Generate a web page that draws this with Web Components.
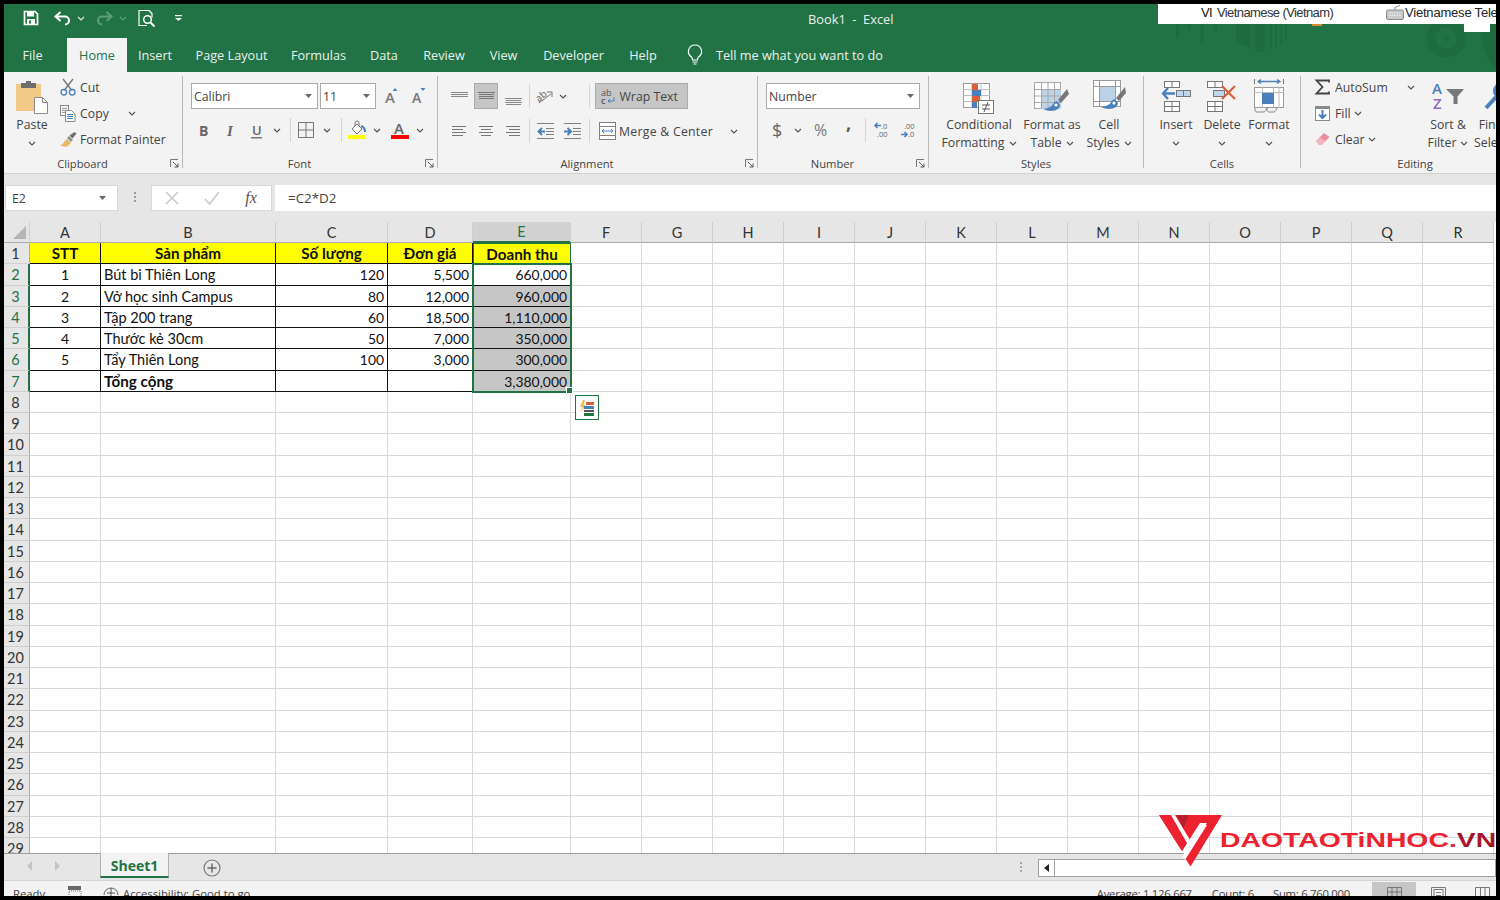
<!DOCTYPE html>
<html>
<head>
<meta charset="utf-8">
<title>Book1 - Excel</title>
<style>
  html, body { margin: 0; padding: 0; background: #000; overflow: hidden; }
</style>
</head>
<body>
<x-excel>
  <x-title-bar title-text="Book1  -  Excel"></x-title-bar>
  <x-tab-strip></x-tab-strip>
  <x-ribbon>
    <x-group label="Clipboard" width="179" pad="9" launcher>
      <x-big icon="paste" lines="Paste" w="38" top="4"></x-big>
      <x-stack style="margin-left:9px">
        <x-tool icon="cut" label="Cut"></x-tool>
        <x-tool icon="copy" label="Copy" chev gap="19"></x-tool>
        <x-tool icon="painter" label="Format Painter"></x-tool>
      </x-stack>
    </x-group>
    <x-group label="Font" width="255" pad="8" launcher>
      <x-rows>
        <x-row cols="127px 58px 30px 24px">
          <x-combo text="Calibri" w="127"></x-combo>
          <x-combo text="11" w="56" style="justify-self:end"></x-combo>
          <x-icon name="growa"></x-icon>
          <x-icon name="shrinka"></x-icon>
        </x-row>
        <x-row cols="26px 28px 24px 16px 10px 22px 20px 8px 24px 16px 30px 10px">
          <x-icon name="bold"></x-icon>
          <x-icon name="italic"></x-icon>
          <x-icon name="under"></x-icon>
          <x-icon name="chev"></x-icon>
          <x-icon name="vsep"></x-icon>
          <x-icon name="borders"></x-icon>
          <x-icon name="chev"></x-icon>
          <x-icon name="vsep"></x-icon>
          <x-icon name="fill"></x-icon>
          <x-icon name="chev"></x-icon>
          <x-icon name="fontcolor"></x-icon>
          <x-icon name="chev"></x-icon>
        </x-row>
      </x-rows>
    </x-group>
    <x-group label="Alignment" width="320" pad="8" launcher>
      <x-rows>
        <x-row cols="26px 28px 26px 6px 26px 10px 18px 6px 98px">
          <x-icon name="atop"></x-icon>
          <x-icon name="amid" on></x-icon>
          <x-icon name="abot"></x-icon>
          <x-icon name="vsep"></x-icon>
          <x-icon name="orient"></x-icon>
          <x-icon name="chev"></x-icon>
          <i></i>
          <x-icon name="vsep"></x-icon>
          <x-tool icon="wrap" label="Wrap Text" on style="justify-self:center;width:93px"></x-tool>
        </x-row>
        <x-row cols="26px 28px 26px 6px 26px 28px 6px 152px">
          <x-icon name="aleft"></x-icon>
          <x-icon name="acenter"></x-icon>
          <x-icon name="aright"></x-icon>
          <x-icon name="vsep"></x-icon>
          <x-icon name="outdent"></x-icon>
          <x-icon name="indent"></x-icon>
          <x-icon name="vsep"></x-icon>
          <x-tool icon="merge" label="Merge &amp; Center" chev gap="17" style="justify-self:center;width:148px;margin-top:1px;letter-spacing:.25px"></x-tool>
        </x-row>
      </x-rows>
    </x-group>
    <x-group label="Number" width="171" pad="8" launcher>
      <x-rows>
        <x-row cols="154px">
          <x-combo text="Number" w="154"></x-combo>
        </x-row>
        <x-row cols="24px 16px 32px 20px 14px 18px 36px">
          <x-icon name="dollar"></x-icon>
          <x-icon name="chev"></x-icon>
          <x-icon name="percent"></x-icon>
          <x-icon name="comma"></x-icon>
          <x-icon name="vsep"></x-icon>
          <x-icon name="incdec"></x-icon>
          <x-icon name="decdec"></x-icon>
        </x-row>
      </x-rows>
    </x-group>
    <x-group label="Styles" width="215" pad="10">
      <x-big icon="cond" lines="Conditional|Formatting" w="80" top="7"></x-big>
      <x-big icon="fmttable" lines="Format as|Table" w="66" top="6"></x-big>
      <x-big icon="cellstyle" lines="Cell|Styles" w="48" top="4"></x-big>
    </x-group>
    <x-group label="Cells" width="157" pad="9">
      <x-big icon="insert" lines="Insert" w="46" top="5"></x-big>
      <x-big icon="delete" lines="Delete" w="46" top="5"></x-big>
      <x-big icon="format" lines="Format" w="48" top="3"></x-big>
    </x-group>
    <x-group label="Editing" width="228" pad="14" no-sep>
      <x-stack style="width:109px">
        <x-tool icon="sigma" label="AutoSum" chev gap="19"></x-tool>
        <x-tool icon="filldown" label="Fill" chev gap="3"></x-tool>
        <x-tool icon="eraser" label="Clear" chev gap="3"></x-tool>
      </x-stack>
      <x-big icon="sort" lines="Sort &amp;|Filter" w="48" top="6"></x-big>
      <x-big icon="find" lines="Find &amp;|Select" w="50" top="3"></x-big>
    </x-group>
  </x-ribbon>
  <x-formula-bar cell="E2" formula="=C2*D2"></x-formula-bar>
  <x-sheet></x-sheet>
  <x-sheet-tabs name="Sheet1"></x-sheet-tabs>
  <x-status-bar></x-status-bar>
  <x-watermark></x-watermark>
</x-excel>

<script>
const { customElements, HTMLElement } = window

const UI_FONT = '"Open Sans", "Noto Sans", sans-serif'
const CELL_FONT = 'Lato, "Noto Sans", sans-serif'

const line = (x1, y1, x2, y2, c = '#7f7f7f', w = 1) =>
  `<path d="M${x1} ${y1}L${x2} ${y2}" stroke="${c}" stroke-width="${w}" fill="none"/>`
const hlines = (rows, c = '#7f7f7f') =>
  rows.map(r => line(r[0], r[2] + 0.5, r[1], r[2] + 0.5, c)).join('')
const box = (x, y, w, h, fill = 'none', stroke = '#8a8a8a') =>
  `<rect x="${x + 0.5}" y="${y + 0.5}" width="${w - 1}" height="${h - 1}" fill="${fill}" stroke="${stroke}"/>`
const BLUE = '#4a80bb'
const ICON_TEXT = '\'Open Sans\',sans-serif'

const ICONS = {
  chev: [8, 5, '<path d="M1 1l3 3 3-3" fill="none" stroke="#505050" stroke-width="1.1"/>'],
  tri: [7, 4, '<path d="M0 0h7L3.5 4z" fill="#6a6a6a"/>'],
  vsep: [1, 24, '<rect width="1" height="24" fill="#d4d4d4"/>'],
  save: [16, 16, '<path d="M1.5 1.5h10.5l2.5 2.5v10.5h-13z" fill="none" stroke="#fff" stroke-width="1.7"/><rect x="4" y="2" width="7" height="4.5" fill="#fff"/><rect x="4" y="9" width="8" height="5" fill="#fff"/><rect x="6" y="10.5" width="2" height="3" fill="#217346"/>'],
  undo: [17, 14, '<path d="M6.5 1L1.5 5.5 6.5 10" fill="none" stroke="#fff" stroke-width="2"/><path d="M2 5.5h9a4 4 0 0 1 0 8" fill="none" stroke="#fff" stroke-width="2"/>'],
  redo: [17, 14, '<path d="M10.5 1l5 4.5-5 4.5" fill="none" stroke="#5f9f7c" stroke-width="2"/><path d="M15 5.5H6a4 4 0 0 0 0 8" fill="none" stroke="#5f9f7c" stroke-width="2"/>'],
  chevw: [8, 5, '<path d="M1 1l3 3 3-3" fill="none" stroke="#e4efe8" stroke-width="1.1"/>'],
  chevd: [8, 5, '<path d="M1 1l3 3 3-3" fill="none" stroke="#5f9f7c" stroke-width="1.1"/>'],
  preview: [18, 17, '<path d="M11 .5H1v15h8M11 .5l3 3v4" fill="none" stroke="#fff" stroke-width="1.2"/><circle cx="9.5" cy="9.5" r="3.8" fill="none" stroke="#fff" stroke-width="1.5"/><path d="M12.5 12.5l4 4" stroke="#fff" stroke-width="1.8"/>'],
  qat: [7, 6, '<rect width="7" height="1.2" fill="#fff"/><path d="M0 3h7L3.5 6z" fill="#fff"/>'],
  bulb: [16, 21, '<path d="M8 1a6.5 6.5 0 0 0-3.5 12c.8.7 1 1.6 1 3h5c0-1.4.2-2.3 1-3A6.5 6.5 0 0 0 8 1z" fill="none" stroke="#fff" stroke-width="1.2"/><path d="M5.5 18h5M6.5 20h3" stroke="#fff" stroke-width="1.2"/>'],
  keyboard: [18, 15, '<rect x=".5" y="5" width="17" height="9.5" rx="1.5" fill="#c9c9c9" stroke="#8c8c8c"/><path d="M3 8h12M3 10.5h12" stroke="#eee" stroke-dasharray="1.5 1"/><path d="M9 5V3c0-2 4-1 5-3" fill="none" stroke="#8c8c8c"/>'],
  paste: [32, 34, '<rect x="0" y="4" width="25" height="27" fill="#f0ca86"/><path d="M5 3h5V1h5v2h5v5H5z" fill="#6e6e6e"/><path d="M18.5 17.5h8l5 5v11h-13z" fill="#fff" stroke="#8a8a8a"/><path d="M26.5 17.5v5h5" fill="none" stroke="#8a8a8a"/>'],
  cut: [16, 18, `<path d="M3 1l8.5 11M13 1L4.5 12" stroke="#777" stroke-width="1.4" fill="none"/><circle cx="3.8" cy="14.3" r="2.8" fill="none" stroke="${BLUE}" stroke-width="1.3"/><circle cx="12.2" cy="14.3" r="2.8" fill="none" stroke="${BLUE}" stroke-width="1.3"/>`],
  copy: [16, 17, `${box(0, 0, 9, 11, '#f6f6f6', '#8a8a8a')}${hlines([[2, 7, 3], [2, 7, 5], [2, 7, 7]], '#9a9a9a')}<path d="M5.5 5.5h6l3.5 3.5v7.5H5.5z" fill="#fff" stroke="#8a8a8a"/>${hlines([[7, 13, 9], [7, 13, 11], [7, 13, 13]], BLUE)}`],
  painter: [17, 15, '<path d="M0 13c2 0 3-1 4-3l3-3 4 4-3 3c-2 1-5 1-8-1z" fill="#eab765"/><path d="M7 6l4 4 2-2-4-4z" fill="#8f8f8f"/><path d="M9.5 3.5l3 3 4-5-2-1.5z" fill="#6f6f6f"/>'],
  growa: [18, 18, `<text x="3" y="16" style="font:600 15px ${ICON_TEXT}" fill="#777">A</text><path d="M10.5 4l2.5-3 2.5 3z" fill="${BLUE}"/>`],
  shrinka: [18, 18, `<text x="3" y="16" style="font:600 14px ${ICON_TEXT}" fill="#777">A</text><path d="M11.5 1l2.5 3 2.5-3z" fill="${BLUE}"/>`],
  bold: [12, 18, `<text x="1" y="15" style="font:700 14px ${ICON_TEXT}" fill="#666">B</text>`],
  italic: [10, 18, '<text x="1" y="15" style="font:italic 700 15px \'Liberation Serif\',serif" fill="#666">I</text>'],
  under: [12, 18, `<text x="1" y="14" style="font:600 13px ${ICON_TEXT}" fill="#666">U</text><rect x="0" y="16" width="11" height="1.5" fill="#777"/>`],
  borders: [16, 16, '<path d="M.5.5h15v15H.5zM8 .5v15M.5 8h15" fill="none" stroke="#777"/>'],
  fill: [19, 18, `<path d="M4 8l5-5 5 5-5 5z" fill="#fff" stroke="#777"/><path d="M7 5V2a2 2 0 0 1 4 0v3" fill="none" stroke="#777"/><path d="M13 5c3 1 4 3 4 6" fill="none" stroke="${BLUE}" stroke-width="2"/><rect y="14" width="18" height="4" fill="#ff0"/>`],
  fontcolor: [18, 18, `<text x="3" y="13" style="font:600 15px ${ICON_TEXT}" fill="#666">A</text><rect y="14" width="18" height="4" fill="#f00"/>`],
  atop: [17, 8, hlines([[0, 17, 0], [0, 17, 2], [0, 17, 4]], '#888')],
  amid: [17, 8, hlines([[0, 17, 0], [1, 16, 2], [1, 16, 4], [1, 16, 6]], '#777')],
  abot: [17, 18, hlines([[0, 17, 11], [1, 16, 13], [0, 17, 15], [1, 16, 17]], '#888')],
  aleft: [14, 10, hlines([[0, 14, 0], [0, 11, 3], [0, 14, 6], [0, 11, 9]], '#777')],
  acenter: [14, 10, hlines([[0, 14, 0], [2, 12, 3], [0, 14, 6], [2, 12, 9]], '#777')],
  aright: [14, 10, hlines([[0, 14, 0], [3, 14, 3], [0, 14, 6], [3, 14, 9]], '#777')],
  orient: [18, 16, `<text x="0" y="11" transform="rotate(-40 6 9)" style="font:10px ${ICON_TEXT}" fill="#666">ab</text><path d="M3 15L15 6" stroke="#777"/><path d="M11 4h5v5" fill="none" stroke="#777"/>`],
  outdent: [17, 16, `${hlines([[0, 17, 0], [9, 17, 5], [9, 17, 8], [9, 17, 11], [0, 17, 15]], '#808080')}<path d="M8 8.5H2M5 5L1.5 8.5 5 12" fill="none" stroke="${BLUE}" stroke-width="2"/>`],
  indent: [17, 16, `${hlines([[0, 17, 0], [9, 17, 5], [9, 17, 8], [9, 17, 11], [0, 17, 15]], '#808080')}<path d="M0 8.5h6M3.5 5L7 8.5 3.5 12" fill="none" stroke="${BLUE}" stroke-width="2"/>`],
  wrap: [15, 15, `<text x="1" y="7" style="font:9px ${ICON_TEXT}" fill="#555">ab</text><text x="1" y="15" style="font:600 9px ${ICON_TEXT}" fill="#555">c</text><path d="M14 8v4H8M10 10l-2 2 2 2" fill="none" stroke="${BLUE}"/>`],
  merge: [17, 18, `${box(0, 0, 17, 18, '#fff', '#808080')}<path d="M0 4.5h17M0 13.5h17" stroke="#808080"/><rect x="1" y="5" width="15" height="8" fill="#fff"/><path d="M3 9h11M5 7L3 9l2 2M12 7l2 2-2 2" fill="none" stroke="${BLUE}"/>`],
  dollar: [12, 20, `<text x="0" y="17" style="font:18px ${ICON_TEXT}" fill="#666">$</text>`],
  percent: [16, 20, `<text x="0" y="16" style="font:16px ${ICON_TEXT}" fill="#777">%</text>`],
  comma: [8, 20, `<text x="2" y="10" style="font:700 18px ${ICON_TEXT}" fill="#555">,</text>`],
  incdec: [16, 16, `<path d="M8 3.5H2M4.5 1L2 3.5 4.5 6" fill="none" stroke="${BLUE}" stroke-width="1.6"/><text x="8" y="7" style="font:7.5px ${ICON_TEXT}" fill="#666">.0</text><text x="4" y="15" style="font:7.5px ${ICON_TEXT}" fill="#666">.00</text>`],
  decdec: [16, 16, `<text x="4" y="7" style="font:7.5px ${ICON_TEXT}" fill="#666">.00</text><path d="M1 12.5h6M4.5 10L7 12.5 4.5 15" fill="none" stroke="${BLUE}" stroke-width="1.6"/><text x="8" y="15" style="font:7.5px ${ICON_TEXT}" fill="#666">.0</text>`],
  cond: [32, 32, `${box(0, 0, 27, 25, '#fff', '#9a9a9a')}<path d="M0 6.5h27M0 12.5h27M0 18.5h27M9 0v25M18 0v25" stroke="#bdbdbd"/><rect x="9" y="1" width="6" height="6" fill="#d9603b"/><rect x="9" y="7" width="9" height="6" fill="${BLUE}"/><rect x="9" y="13" width="8" height="6" fill="#d9603b"/><rect x="9" y="19" width="5" height="6" fill="${BLUE}"/>${box(15, 17, 16, 14, '#fff', '#777')}<path d="M19 22h8M19 26h8M25 19l-4 10" stroke="#555" fill="none"/>`],
  fmttable: [36, 36, `${box(0, 0, 27, 27, '#fff', '#aaa')}<rect x="7" y="7" width="20" height="20" fill="#bcd2e8"/><path d="M0 7.5h27M0 14h27M0 20.5h27M7.5 0v27M14 0v27M20.5 0v27" stroke="#a8a8a8"/><path d="M33 7l-9 11 3 3 8-9z" fill="#777"/><path d="M23 19c-4 1-4 5-7 6-2 1-5 2-7 2 6 3 16 3 17-4z" fill="${BLUE}"/><circle cx="22" cy="23" r="1.6" fill="#fff"/>`],
  cellstyle: [33, 36, `${box(0, 0, 28, 27, '#fff', '#9a9a9a')}<rect x="7" y="7" width="16" height="15" fill="#bcd2e8"/><path d="M0 6.5h28M0 21.5h28M6.5 0v27M22.5 0v27" stroke="#9a9a9a"/><path d="M32 7l-9 11 3 3 7-8z" fill="#777"/><path d="M22 19c-4 1-4 5-7 6-2 1-5 2-7 2 6 3 16 3 17-4z" fill="${BLUE}"/><circle cx="21" cy="23" r="1.6" fill="#fff"/>`],
  insert: [31, 32, `${box(3, 0, 16, 7, '#fff', '#777')}<path d="M11 0v7" stroke="#777"/>${box(15, 9, 15, 7, '#c0d6ea', '#777')}<path d="M22.5 9v7" stroke="#777"/><path d="M14 12.5H2M7 7l-5 5.5L7 18" fill="none" stroke="${BLUE}" stroke-width="2.4"/>${box(3, 20, 16, 11, '#fff', '#777')}<path d="M3 25.5h16M11 20v11" stroke="#777"/>`],
  delete: [30, 32, `${box(0, 0, 16, 7, '#fff', '#777')}<path d="M8 0v7" stroke="#777"/>${box(6, 9, 12, 7, '#c0d6ea', '#777')}${box(0, 20, 16, 11, '#fff', '#777')}<path d="M0 25.5h16M8 20v11" stroke="#777"/><path d="M15 5l13 13M28 5L15 18" stroke="#d9603b" stroke-width="2.2"/>`],
  format: [30, 34, `<path d="M.5 0v5M29.5 0v5" stroke="#777"/><path d="M4 2.5h22M7 .5L4 2.5l3 2M23 .5l3 2-3 2" fill="none" stroke="${BLUE}" stroke-width="1.3"/>${box(0, 8, 30, 21, '#fff', '#999')}<path d="M0 13.5h30M8.5 8v21M19.5 8v21M25 8v21" stroke="#bbb"/><rect x="8" y="14" width="12" height="11" fill="${BLUE}"/><path d="M1 29v2c0 1 1 2 2 2h7c1 0 3-3 3-4M13 29v2c0 1 1 2 2 2h5c1 0 3-3 3-4" fill="none" stroke="#888"/>`],
  sigma: [15, 16, '<path d="M14 3.5V1.5H1.5L7.5 8l-6 6.5H14v-2" fill="none" stroke="#444" stroke-width="1.8"/>'],
  filldown: [15, 15, `${box(0, 0, 15, 15, '#fff', '#8a8a8a')}<rect x="1" y="1" width="13" height="2" fill="#888"/><path d="M7.5 4v8M4 8.5l3.5 3.5L11 8.5" fill="none" stroke="${BLUE}" stroke-width="2"/>`],
  eraser: [15, 14, '<path d="M1 9l8-8 5.5 4-8 8H4z" fill="#ea8d9d"/><path d="M1 9l3.5 4h2L10 9 5 5.5z" fill="#f2b4bf"/>'],
  sort: [33, 29, `<text x="0" y="12" style="font:600 15px ${ICON_TEXT}" fill="${BLUE}">A</text><text x="1" y="27" style="font:600 15px ${ICON_TEXT}" fill="#9267c1">Z</text><path d="M14 7h18l-6.5 7.5V22h-4v-7.5z" fill="#777"/>`],
  find: [26, 34, `<circle cx="18" cy="12" r="7.5" fill="none" stroke="${BLUE}" stroke-width="3"/><path d="M12 18L2 29" stroke="${BLUE}" stroke-width="4"/>`],
  macro: [14, 13, '<rect width="13" height="4" y="1" fill="#666"/><rect x="1" y="6" width="12" height="7" fill="none" stroke="#777" stroke-dasharray="1 1"/>'],
  access: [16, 14, '<path d="M1 8a7 7 0 0 1 14 0" fill="none" stroke="#666"/><path d="M8 1v10M4 6h8M5 13l3-4 3 4" fill="none" stroke="#555"/>'],
  viewnormal: [15, 14, '<path d="M.5.5h14v13H.5zM.5 5h14M.5 9.5h14M5 .5v13M10 .5v13" fill="none" stroke="#777"/>'],
  viewpage: [15, 15, `<path d="M.5.5h14v14H.5z" fill="none" stroke="#777"/><rect x="3" y="2.5" width="9" height="12" fill="#fff" stroke="#777"/>${hlines([[5, 10, 5], [5, 10, 8], [5, 10, 11]], '#777')}`],
  viewbreak: [15, 15, '<path d="M.5.5h14v14H.5zM5.5.5v14M10 .5v14" fill="none" stroke="#777"/>'],
  tabprev: [5, 10, '<path d="M5 0L0 5l5 5z" fill="#c4c4c4"/>'],
  tabnext: [5, 10, '<path d="M0 0l5 5-5 5z" fill="#c4c4c4"/>'],
  plus: [18, 18, '<circle cx="9" cy="9" r="8" fill="none" stroke="#777" stroke-width="1.2"/><path d="M9 4.5v9M4.5 9h9" stroke="#666" stroke-width="1.4"/>'],
  cross: [14, 14, '<path d="M1 1l12 12M13 1L1 13" stroke="#c9c9c9" stroke-width="1.5"/>'],
  check: [16, 14, '<path d="M1 8l4.5 5L15 1" fill="none" stroke="#c9c9c9" stroke-width="1.5"/>'],
  launcher: [9, 9, '<path d="M.5 8V.5H8" fill="none" stroke="#777"/><path d="M3 3l5 5M8 4.5V8H4.5" fill="none" stroke="#555"/>'],
  quick: [16, 16, `<path d="M4 0L1 7h2.5L2 12l5-7H4.5L6 0z" fill="#f2b84b"/><rect x="7" y="2" width="8" height="3" fill="#d9603b"/><rect x="5" y="6" width="10" height="3" fill="${BLUE}"/><rect x="5" y="10" width="10" height="2" fill="#555"/><rect x="5" y="13" width="10" height="3" fill="#217346"/>`]
}

class XIcon extends HTMLElement {
  constructor () {
    super()
    this.attachShadow({ mode: 'open' })
  }

  connectedCallback () {
    const [w, h, body] = ICONS[this.getAttribute('name')]
    const on = this.hasAttribute('on')
    this.shadowRoot.innerHTML = `
      <style>
        :host {
          display: ${on ? 'flex' : 'inline-flex'};
          align-items: center;
          justify-content: center;
          flex: none;
          line-height: 0;
          ${on ? 'width: 24px; height: 26px; box-sizing: border-box; background: #c6c6c6; border: 1px solid #ababab;' : ''}
        }
        svg { display: block; overflow: visible; }
      </style>
      <svg width="${w}" height="${h}" viewBox="0 0 ${w} ${h}">${body}</svg>
    `
  }
}

const excelTemplate = document.createElement('template')
excelTemplate.innerHTML = `
  <style>
    :host {
      display: flex;
      flex-direction: column;
      position: relative;
      width: 1492px;
      height: 892px;
      margin: 4px;
      overflow: hidden;
      background: #217346;
      font-family: ${UI_FONT};
      font-size: 12.3px;
      color: #444;
    }
  </style>
  <slot></slot>
`

class XExcel extends HTMLElement {
  constructor () {
    super()
    this.attachShadow({ mode: 'open' })
    this.shadowRoot.appendChild(excelTemplate.content.cloneNode(true))
  }
}

class XTitleBar extends HTMLElement {
  constructor () {
    super()
    this.attachShadow({ mode: 'open' })
  }

  connectedCallback () {
    this.shadowRoot.innerHTML = `
      <style>
        :host {
          display: grid;
          grid-template-columns: 1fr;
          align-items: center;
          position: relative;
          height: 34px;
          color: #e9f1ec;
          flex: none;
        }
        .qat {
          display: grid;
          grid-template-columns: 16px 14px 18px 20px 26px 12px 36px 26px;
          align-items: center;
          justify-items: center;
          padding-left: 19px;
          margin-top: -6px;
          grid-area: 1 / 1;
        }
        .title {
          grid-area: 1 / 1;
          margin-left: 804px;
          font-size: 12.8px;
          white-space: pre;
          margin-top: -4px;
        }
        .deco { position: absolute; left: 1140px; top: 20px; }
        .lang {
          position: absolute;
          left: 1154px;
          top: 0;
          right: 0;
          height: 20px;
          box-sizing: border-box;
          padding-bottom: 4px;
          background: #fff;
          display: flex;
          align-items: center;
          overflow: hidden;
          white-space: nowrap;
          font: 13px "Liberation Sans", sans-serif;
          letter-spacing: -.6px;
          color: #222;
        }
        .vi { margin-left: 43px; width: 16px; flex: none; color: #111; }
        .name { width: 169px; flex: none; color: #333; }
        .telex { margin-left: 1px; flex: none; letter-spacing: -.2px; }
      </style>
      <svg class="deco" width="352" height="48" viewBox="0 0 352 48" fill="#1e6b40">
        <rect x="32" y="0" width="3" height="14"/><rect x="44" y="0" width="3" height="6"/>
        <rect x="56" y="0" width="4" height="20"/><rect x="70" y="0" width="3" height="8"/>
        <path d="M92 0h14v24l-14-6zM111 0h10v28h-10z"/><rect x="126" y="0" width="2" height="24"/>
        <rect x="131" y="0" width="2" height="24"/><rect x="136" y="0" width="2" height="20"/>
        <rect x="141" y="0" width="2" height="16"/><rect x="168" y="0" width="10" height="2" fill="#d98a2b"/>
        <circle cx="302" cy="14" r="15" fill="none" stroke="#1e6b40" stroke-width="9"/>
        <circle cx="302" cy="14" r="3"/><path d="M336 0h16v44c-10-8-16-24-16-44z"/>
        <rect x="320" y="0" width="26" height="8" fill="#fff"/>
      </svg>
      <div class="qat">
        <x-icon name="save"></x-icon><i></i>
        <x-icon name="undo"></x-icon><x-icon name="chevw"></x-icon>
        <x-icon name="redo"></x-icon><x-icon name="chevd"></x-icon>
        <x-icon name="preview"></x-icon><x-icon name="qat"></x-icon>
      </div>
      <div class="title">${this.getAttribute('title-text')}</div>
      <div class="lang">
        <span class="vi">VI</span><span class="name">Vietnamese (Vietnam)</span>
        <x-icon name="keyboard"></x-icon><span class="telex">Vietnamese Telex</span>
      </div>
    `
  }
}

const TABS = [
  ['File', 51], ['Home', 60], ['Insert', 56], ['Page Layout', 97], ['Formulas', 77],
  ['Data', 54], ['Review', 66], ['View', 53], ['Developer', 87], ['Help', 52]
]

class XTabStrip extends HTMLElement {
  constructor () {
    super()
    this.attachShadow({ mode: 'open' })
  }

  connectedCallback () {
    const tabs = TABS.map(([name, w]) =>
      `<div class="tab ${name === 'Home' ? 'on' : ''} ${name === 'File' ? 'file' : ''}" style="width:${w}px">${name}</div>`
    ).join('')
    this.shadowRoot.innerHTML = `
      <style>
        :host {
          display: flex;
          height: 34px;
          flex: none;
          padding-left: 3px;
          color: #e9f1ec;
          font-size: 12.7px;
          position: relative;
        }
        .tab { display: flex; align-items: center; justify-content: center; padding-bottom: 1px; box-sizing: border-box; }
        .file { margin-right: 9px; }
        .on { background: #f3f3f3; color: #217346; }
        .tell { display: flex; align-items: center; margin-left: 18px; gap: 13px; padding-bottom: 1px; }
      </style>
      ${tabs}
      <div class="tell"><x-icon name="bulb"></x-icon><span>Tell me what you want to do</span></div>
    `
  }
}

const ribbonTemplate = document.createElement('template')
ribbonTemplate.innerHTML = `
  <style>
    :host {
      display: flex;
      flex: none;
      height: 102px;
      box-sizing: border-box;
      padding-top: 4px;
      background: #f3f3f3;
      border-bottom: 1px solid #d2d2d2;
      overflow: hidden;
    }
  </style>
  <slot></slot>
`

class XRibbon extends HTMLElement {
  constructor () {
    super()
    this.attachShadow({ mode: 'open' })
    this.shadowRoot.appendChild(ribbonTemplate.content.cloneNode(true))
  }
}

class XGroup extends HTMLElement {
  constructor () {
    super()
    this.attachShadow({ mode: 'open' })
  }

  connectedCallback () {
    const launcher = this.hasAttribute('launcher')
    const sep = !this.hasAttribute('no-sep')
    this.shadowRoot.innerHTML = `
      <style>
        :host {
          display: flex;
          flex-direction: column;
          flex: none;
          box-sizing: border-box;
          width: ${this.getAttribute('width')}px;
          height: 92px;
          ${sep ? 'border-right: 1px solid #b9b9b9;' : ''}
        }
        .body {
          display: flex;
          height: 79px;
          flex: none;
          padding-left: ${this.getAttribute('pad')}px;
        }
        .foot {
          display: flex;
          align-items: center;
          height: 17px;
          flex: none;
          font-size: 11.2px;
          color: #444;
        }
        .label { flex: 1; text-align: center; ${launcher ? 'margin-right: 5px;' : ''} }
        .launch { width: 16px; display: flex; justify-content: center; }
      </style>
      <div class="body"><slot></slot></div>
      <div class="foot">
        <span class="label">${this.getAttribute('label')}</span>
        ${launcher ? '<span class="launch"><x-icon name="launcher"></x-icon></span>' : ''}
      </div>
    `
  }
}

class XRows extends HTMLElement {
  constructor () {
    super()
    this.attachShadow({ mode: 'open' })
    this.shadowRoot.innerHTML = `
      <style>
        :host {
          display: grid;
          grid-template-rows: 26px 26px;
          row-gap: 8px;
          padding-top: 7px;
          align-content: start;
        }
      </style>
      <slot></slot>
    `
  }
}

class XRow extends HTMLElement {
  constructor () {
    super()
    this.attachShadow({ mode: 'open' })
  }

  connectedCallback () {
    this.shadowRoot.innerHTML = `
      <style>
        :host {
          display: grid;
          grid-template-columns: ${this.getAttribute('cols')};
          align-items: center;
          justify-items: center;
          height: 26px;
        }
      </style>
      <slot></slot>
    `
  }
}

class XStack extends HTMLElement {
  constructor () {
    super()
    this.attachShadow({ mode: 'open' })
    this.shadowRoot.innerHTML = `
      <style>
        :host {
          display: grid;
          grid-auto-rows: 26px;
          margin-top: -2px;
          align-content: start;
          justify-items: start;
        }
      </style>
      <slot></slot>
    `
  }
}

class XTool extends HTMLElement {
  constructor () {
    super()
    this.attachShadow({ mode: 'open' })
  }

  connectedCallback () {
    const on = this.hasAttribute('on')
    const boxed = this.getAttribute('icon') === 'wrap' || this.getAttribute('icon') === 'merge'
    const chev = this.hasAttribute('chev')
    this.shadowRoot.innerHTML = `
      <style>
        :host {
          display: flex;
          align-items: center;
          box-sizing: border-box;
          height: 26px;
          white-space: nowrap;
          justify-self: start;
          ${boxed ? `padding-left: ${on ? 4 : 5}px;` : ''}
          ${on ? 'background: #c6c6c6; border: 1px solid #ababab;' : ''}
        }
        .ic { width: 20px; flex: none; display: flex; }
        .chev { margin-left: ${this.getAttribute('gap') || 4}px; display: flex; }
      </style>
      <span class="ic"><x-icon name="${this.getAttribute('icon')}"></x-icon></span>
      <span>${this.getAttribute('label')}</span>
      ${chev ? '<span class="chev"><x-icon name="chev"></x-icon></span>' : ''}
    `
  }
}

class XBig extends HTMLElement {
  constructor () {
    super()
    this.attachShadow({ mode: 'open' })
  }

  connectedCallback () {
    const lines = this.getAttribute('lines').split('|')
    const chev = '<x-icon name="chev"></x-icon>'
    const rows = lines.length === 1
      ? `<div class="ln">${lines[0]}</div><div class="ln">${chev}</div>`
      : `<div class="ln">${lines[0]}</div><div class="ln">${lines[1]}${chev}</div>`
    this.shadowRoot.innerHTML = `
      <style>
        :host {
          display: flex;
          flex-direction: column;
          align-items: center;
          flex: none;
          width: ${this.getAttribute('w')}px;
        }
        .ic {
          height: 40px;
          box-sizing: border-box;
          padding-top: ${this.getAttribute('top')}px;
          display: flex;
          align-items: flex-start;
        }
        .ln {
          height: 18px;
          line-height: 18px;
          white-space: nowrap;
          display: flex;
          align-items: center;
          gap: 4px;
        }
      </style>
      <div class="ic"><x-icon name="${this.getAttribute('icon')}"></x-icon></div>
      ${rows}
    `
  }
}

class XCombo extends HTMLElement {
  constructor () {
    super()
    this.attachShadow({ mode: 'open' })
  }

  connectedCallback () {
    this.shadowRoot.innerHTML = `
      <style>
        :host {
          display: flex;
          align-items: center;
          justify-content: space-between;
          box-sizing: border-box;
          width: ${this.getAttribute('w')}px;
          height: 26px;
          padding: 0 5px 0 2px;
          background: #fff;
          border: 1px solid #ababab;
          justify-self: start;
          color: #444;
        }
      </style>
      <span>${this.getAttribute('text')}</span>
      <x-icon name="tri"></x-icon>
    `
  }
}

class XFormulaBar extends HTMLElement {
  constructor () {
    super()
    this.attachShadow({ mode: 'open' })
  }

  connectedCallback () {
    this.shadowRoot.innerHTML = `
      <style>
        :host {
          display: flex;
          align-items: center;
          flex: none;
          height: 48px;
          box-sizing: border-box;
          padding: 0 0 0 1px;
          background: #e6e6e6;
          color: #444;
        }
        .name {
          display: flex;
          align-items: center;
          justify-content: space-between;
          width: 113px;
          height: 26px;
          box-sizing: border-box;
          padding: 0 11px 0 6px;
          background: #fff;
          border: 1px solid #d9d9d9;
        }
        .dots {
          width: 33px;
          height: 12px;
          display: flex;
          justify-content: center;
        }
        .dots i { width: 2px; height: 100%; background: repeating-linear-gradient(#9a9a9a 0 2px, transparent 2px 4px); }
        .btns {
          display: grid;
          grid-template-columns: 40px 40px 38px;
          justify-items: center;
          align-items: center;
          width: 121px;
          height: 26px;
          box-sizing: border-box;
          background: #fff;
          border: 1px solid #d9d9d9;
        }
        .fx { font: italic 16px "Liberation Serif", serif; color: #555; }
        .input {
          flex: 1;
          height: 26px;
          line-height: 26px;
          margin-left: 3px;
          padding-left: 13px;
          background: #fff;
          font-size: 13.4px;
        }
      </style>
      <div class="name"><span>${this.getAttribute('cell')}</span><x-icon name="tri"></x-icon></div>
      <div class="dots"><i></i></div>
      <div class="btns">
        <x-icon name="cross"></x-icon>
        <x-icon name="check"></x-icon>
        <span class="fx">fx</span>
      </div>
      <div class="input">${this.getAttribute('formula')}</div>
    `
  }
}

const COLUMNS = 'ABCDEFGHIJKLMNOPQR'.split('')
const ROW_COUNT = 30
const DATA = [
  ['STT', 'Sản phẩm', 'Số lượng', 'Đơn giá', 'Doanh thu'],
  ['1', 'Bút bi Thiên Long', '120', '5,500', '660,000'],
  ['2', 'Vở học sinh Campus', '80', '12,000', '960,000'],
  ['3', 'Tập 200 trang', '60', '18,500', '1,110,000'],
  ['4', 'Thước kẻ 30cm', '50', '7,000', '350,000'],
  ['5', 'Tẩy Thiên Long', '100', '3,000', '300,000'],
  ['', 'Tổng cộng', '', '', '3,380,000']
]

class XSheet extends HTMLElement {
  constructor () {
    super()
    this.attachShadow({ mode: 'open' })
  }

  _cell (r, c) {
    if (r >= DATA.length) {
      return '<div class="c"></div>'
    }
    if (c >= DATA[0].length) {
      return '<div class="c"></div>'
    }
    const text = DATA[r][c]
    const classes = ['c', 't']
    if (r === 0) classes.push('head')
    else if (c === 0) classes.push('mid')
    else if (c > 1) classes.push('num')
    if (r === 6 && c === 1) classes.push('strong')
    if (c === 4 && r >= 2) classes.push('picked')
    if (c === 4 && r === 0) classes.push('e1')
    return `<div class="${classes.join(' ')}">${text}</div>`
  }

  connectedCallback () {
    let html = '<div class="corner"><i></i></div>'
    html += COLUMNS.map((c, i) => `<div class="ch ${i === 4 ? 'sel' : ''}">${c}</div>`).join('')
    for (let r = 0; r < ROW_COUNT; r++) {
      html += `<div class="rh ${r >= 1 && r <= 6 ? 'sel' : ''}">${r + 1}</div>`
      for (let c = 0; c < COLUMNS.length; c++) html += this._cell(r, c)
    }
    this.shadowRoot.innerHTML = `
      <style>
        :host {
          display: block;
          flex: none;
          height: 631px;
          overflow: hidden;
          background: #fff;
          font-family: ${CELL_FONT};
          font-size: 14.5px;
          color: #111;
        }
        .grid {
          display: grid;
          position: relative;
          grid-template-columns: 26px 71px 175px 112px 85px 98px repeat(13, 71px);
          grid-template-rows: 21px;
          grid-auto-rows: 21.25px;
        }
        .corner, .ch, .rh {
          background: #e6e6e6;
          box-sizing: border-box;
          display: flex;
          align-items: center;
          justify-content: center;
          color: #333;
          font-size: 14.5px;
        }
        .corner { align-items: flex-end; justify-content: flex-end; padding: 0 3px 3px 0; border-bottom: 1px solid #ababab; border-right: 1px solid #d0d0d0; }
        .corner i { width: 0; height: 0; border-left: 13px solid transparent; border-bottom: 13px solid #b5b5b5; }
        .ch { border-right: 1px solid #cfcfcf; border-bottom: 1px solid #ababab; }
        .ch.sel { background: #d2d2d2; color: #217346; border-bottom: 2px solid #217346; }
        .rh { border-bottom: 1px solid #cfcfcf; border-right: 1px solid #ababab; padding: 1px 2px 0 0; }
        .rh.sel { color: #217346; border-right: 2px solid #217346; padding-right: 1px; }
        .c {
          box-sizing: border-box;
          border-right: 1px solid #d9d9d9;
          border-bottom: 1px solid #d9d9d9;
          min-width: 0;
          white-space: nowrap;
        }
        .t {
          display: flex;
          align-items: center;
          padding: 1px 3px 0;
          border-color: #111;
          overflow: hidden;
        }
        .head { justify-content: center; background: #ff0; font-weight: 700; font-size: 15.2px; padding-top: 0; }
        .mid { justify-content: center; font-size: 14px; }
        .num { justify-content: flex-end; font-size: 13.9px; }
        .strong { font-weight: 700; font-size: 15.2px; }
        .picked { background: #c6c6c6; }
        .e1 { border: 1px solid #217346; border-bottom: 0; }
        .selection {
          position: absolute;
          grid-area: 3 / 6 / 9 / 7;
          left: -1px;
          top: -1px;
          right: -1px;
          bottom: -1px;
          border: 2px solid #217346;
          pointer-events: none;
        }
        .handle {
          position: absolute;
          right: -3px;
          bottom: -3px;
          width: 5px;
          height: 5px;
          background: #217346;
          border: 1px solid #fff;
        }
        .quick {
          position: absolute;
          left: 571px;
          top: 173px;
          width: 24px;
          height: 25px;
          box-sizing: border-box;
          background: #fff;
          border: 1px solid #217346;
          display: flex;
          align-items: center;
          justify-content: center;
        }
      </style>
      <div class="grid">
        ${html}
        <div class="selection"><div class="handle"></div></div>
        <div class="quick"><x-icon name="quick"></x-icon></div>
      </div>
    `
  }
}

class XSheetTabs extends HTMLElement {
  constructor () {
    super()
    this.attachShadow({ mode: 'open' })
  }

  connectedCallback () {
    this.shadowRoot.innerHTML = `
      <style>
        :host {
          display: flex;
          align-items: flex-start;
          flex: none;
          height: 28px;
          box-sizing: border-box;
          background: #e6e6e6;
          border-top: 1px solid #9c9c9c;
          border-bottom: 1px solid #d4d4d4;
        }
        .nav {
          display: grid;
          grid-template-columns: 28px 28px;
          justify-items: center;
          align-items: center;
          box-sizing: border-box;
          padding-left: 11px;
          width: 67px;
          height: 24px;
          margin-right: 29px;
          flex: none;
        }
        .tab {
          width: 69px;
          height: 25px;
          margin-top: -1px;
          padding-top: 2px;
          box-sizing: border-box;
          background: #f3f3f3;
          border-left: 1px solid #b0b0b0;
          border-right: 1px solid #b0b0b0;
          border-bottom: 2px solid #217346;
          color: #217346;
          font-weight: 700;
          font-size: 14px;
          display: flex;
          align-items: center;
          justify-content: center;
        }
        .plus { margin: 5px 0 0 34px; }
        .dots {
          width: 2px;
          height: 12px;
          margin: 8px 0 0 799px;
          background: repeating-linear-gradient(#a8a8a8 0 2px, transparent 2px 4px);
          flex: none;
        }
        .bar {
          flex: 1;
          height: 18px;
          margin: 5px 0 0 16px;
          box-sizing: border-box;
          background: #fff;
          border: 1px solid #a0a0a0;
          display: flex;
        }
        .arrow {
          width: 16px;
          box-sizing: border-box;
          border-right: 1px solid #a0a0a0;
          display: flex;
          align-items: center;
          justify-content: center;
        }
        .arrow i { border-right: 5px solid #222; border-top: 4px solid transparent; border-bottom: 4px solid transparent; }
      </style>
      <div class="nav"><x-icon name="tabprev"></x-icon><x-icon name="tabnext"></x-icon></div>
      <div class="tab">${this.getAttribute('name')}</div>
      <div class="plus"><x-icon name="plus"></x-icon></div>
      <div class="dots"></div>
      <div class="bar"><div class="arrow"><i></i></div></div>
    `
  }
}

class XStatusBar extends HTMLElement {
  constructor () {
    super()
    this.attachShadow({ mode: 'open' })
  }

  connectedCallback () {
    this.shadowRoot.innerHTML = `
      <style>
        :host {
          display: flex;
          align-items: flex-start;
          flex: 1;
          min-height: 0;
          overflow: hidden;
          background: #f3f3f3;
          font-size: 11.3px;
          line-height: 16px;
          color: #444;
          white-space: nowrap;
        }
        .ready { margin: 5px 0 0 9px; width: 55px; }
        .macro { margin: 4px 21px 0 0; }
        .acc { margin: 5px 0 0 0; display: flex; gap: 4px; }
        .stats { margin: 5px 0 0 auto; display: flex; letter-spacing: -.25px; }
        .stats span:nth-child(1) { margin-right: 20px; }
        .stats span:nth-child(2) { margin-right: 19px; }
        .views {
          display: grid;
          grid-template-columns: 44px 44px 44px;
          justify-items: center;
          flex: none;
          margin: 1px -8px 0 22px;
        }
        .views div { height: 20px; width: 100%; display: flex; justify-content: center; padding-top: 4px; box-sizing: border-box; }
        .views .on { background: #c6c6c6; }
      </style>
      <span class="ready">Ready</span>
      <span class="macro"><x-icon name="macro"></x-icon></span>
      <span class="acc"><x-icon name="access"></x-icon><span>Accessibility: Good to go</span></span>
      <span class="stats"><span>Average: 1,126,667</span><span>Count: 6</span><span>Sum: 6,760,000</span></span>
      <div class="views">
        <div class="on"><x-icon name="viewnormal"></x-icon></div>
        <div><x-icon name="viewpage"></x-icon></div>
        <div><x-icon name="viewbreak"></x-icon></div>
      </div>
    `
  }
}

class XWatermark extends HTMLElement {
  constructor () {
    super()
    this.attachShadow({ mode: 'open' })
    this.shadowRoot.innerHTML = `
      <style>
        :host {
          position: absolute;
          left: 1155px;
          top: 809px;
          width: 337px;
          height: 54px;
          overflow: hidden;
          pointer-events: none;
        }
        svg { position: absolute; left: 0; top: 0; }
        .name {
          position: absolute;
          left: 61px;
          top: 15px;
          transform-origin: 0 0;
          transform: scaleX(1.35);
          font: 700 21px/24px "Liberation Sans", sans-serif;
          color: #ed2230;
          white-space: nowrap;
        }
        .name b { color: #a5162a; font-weight: 700; }
      </style>
      <svg width="66" height="54" viewBox="0 0 66 54">
        <path d="M0 2h63L31.5 53.5 26 45 48 10H41L23 38z" fill="#ed2230"/>
        <path d="M0 2h17.5L31 25 23 38z" fill="#ed2230"/>
        <path d="M18 2h12L24 16z" fill="#b81e2b"/>
        <path d="M16 2l15 25-2.5 4L12 2z" fill="#fff"/>
        <path d="M43 12h5L26 47l-2.5-4z" fill="#fff"/>
      </svg>
      <div class="name">DAOTAOTiNHOC.<b>VN</b></div>
    `
  }
}

customElements.define('x-icon', XIcon)
customElements.define('x-excel', XExcel)
customElements.define('x-title-bar', XTitleBar)
customElements.define('x-tab-strip', XTabStrip)
customElements.define('x-ribbon', XRibbon)
customElements.define('x-group', XGroup)
customElements.define('x-rows', XRows)
customElements.define('x-row', XRow)
customElements.define('x-stack', XStack)
customElements.define('x-tool', XTool)
customElements.define('x-big', XBig)
customElements.define('x-combo', XCombo)
customElements.define('x-formula-bar', XFormulaBar)
customElements.define('x-sheet', XSheet)
customElements.define('x-sheet-tabs', XSheetTabs)
customElements.define('x-status-bar', XStatusBar)
customElements.define('x-watermark', XWatermark)
</script>
</body>
</html>
